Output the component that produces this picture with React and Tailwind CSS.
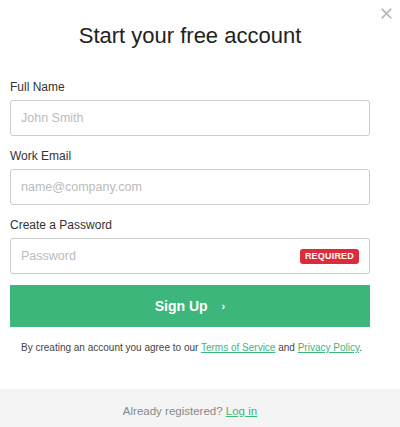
import { useState } from 'react';

// Signup modal — plain form, green CTA, grey footer strip
const CloseX = () => (
  <svg viewBox="0 0 12 12" className="h-[11px] w-[11px]" fill="none">
    <path d="M1.5 1.5l9 9M10.5 1.5l-9 9" stroke="currentColor" strokeWidth="2" strokeLinecap="square" />
  </svg>
);

function Field({ label, placeholder, type = 'text', badge }) {
  const [value, setValue] = useState('');
  return (
    <div className="flex flex-col">
      <label className="text-[12px] leading-[14px] text-[#333]">{label}</label>
      <div className="relative mt-[6px]">
        <input
          type={type}
          value={value}
          onChange={(e) => setValue(e.target.value)}
          placeholder={placeholder}
          className="h-[36px] w-full rounded-[3px] border border-[#ccc] bg-white px-[10px] text-[12.5px] text-[#333] outline-none placeholder:text-[#bbb]"
        />
        {badge && (
          <span className="absolute right-[11px] top-[11px] rounded-[3px] bg-[#dc2b3c] px-[5px] text-[9px] font-bold leading-[15px] tracking-[0.2px] text-white">
            {badge}
          </span>
        )}
      </div>
    </div>
  );
}

export default function App() {
  return (
    <div className="relative flex w-[400px] flex-col bg-white" style={{ fontFamily: "'Liberation Sans', Arial, sans-serif" }}>
      <button className="absolute right-[8px] top-[8px] text-[#bbb]">
        <CloseX />
      </button>

      <h1 className="pl-[10px] pr-[30px] pt-[21px] text-center text-[22px] leading-[30px] text-[#222]">Start your free account</h1>

      <form className="mt-[29px] flex flex-col gap-[13px] pl-[10px] pr-[30px]" onSubmit={(e) => e.preventDefault()}>
        <Field label="Full Name" placeholder="John Smith" />
        <Field label="Work Email" placeholder="name@company.com" type="email" />
        <Field label="Create a Password" placeholder="Password" type="password" badge="REQUIRED" />
      </form>

      <div className="mt-[11px] pl-[10px] pr-[30px]">
        <button className="flex h-[42px] w-full items-center justify-center gap-[14px] bg-[#3cb67b] text-[14px] font-bold text-white">
          <span>Sign Up</span>
          <span className="text-[11px]">›</span>
        </button>
      </div>

      <p className="mt-[15px] pl-[21px] text-[10px] leading-[12px] text-[#444]">
        By creating an account you agree to our{' '}
        <a href="#" className="text-[#3cb67b] underline">Terms of Service</a> and{' '}
        <a href="#" className="text-[#3cb67b] underline">Privacy Policy</a>.
      </p>

      <div className="mt-[35px] flex h-[38px] items-start justify-center bg-[#f4f4f4] pl-[10px] pr-[30px] pt-[15px] text-[11.5px] leading-[14px] text-[#888]">
        <span>
          Already registered?{' '}
          <a href="#" className="text-[#3cb67b] underline">Log in</a>
        </span>
      </div>
    </div>
  );
}
